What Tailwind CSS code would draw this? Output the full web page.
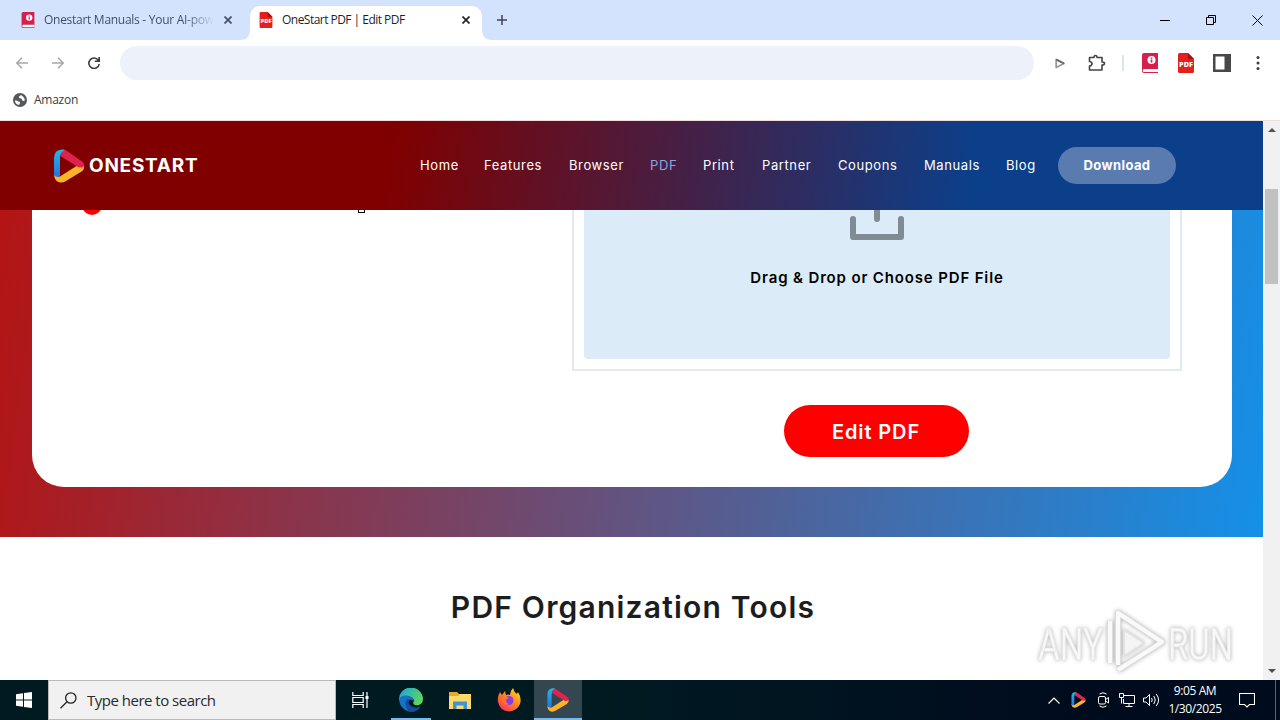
<!DOCTYPE html>
<html lang="en">
<head>
  <meta charset="UTF-8" />
  <title>OneStart PDF | Edit PDF</title>
  <script src="https://cdn.jsdelivr.net/npm/@tailwindcss/browser@4"></script>
  <meta name="viewport" content="width=device-width, initial-scale=1.0">
</head>
<body class="w-[1280px] h-[720px] overflow-hidden flex flex-col bg-white font-['Open_Sans',sans-serif]">

  <!-- Shared shapes -->
  <svg class="absolute w-0 h-0">
    <defs>
      <linearGradient id="blue" x1="0" y1="0" x2="0" y2="1"><stop offset="0" stop-color="#22b8e8"/><stop offset="1" stop-color="#2474d8"/></linearGradient>
      <linearGradient id="edge" x1="0" y1="0" x2="1" y2="0.5"><stop offset="0" stop-color="#1ba0e8"/><stop offset="1" stop-color="#5bd65a"/></linearGradient>
      <linearGradient id="fox" x1="1" y1="0" x2="0.2" y2="1"><stop offset="0" stop-color="#ffe226"/><stop offset="0.5" stop-color="#ff8a1c"/><stop offset="1" stop-color="#ff2b60"/></linearGradient>
    </defs>
    <symbol id="onestart" viewBox="0 0 32 34">
      <path d="M9 .5Q12 .5 14 2L28.500 12Q32 14.500 31 18.500Q30 20.500 28 20.500L23.500 17L7.500 7Z" fill="#e0234e"/>
      <path d="M31 17Q31.500 20.500 28.500 22.500L13 32Q10 34 7 33.500Q1 32 1 25L7 27.500L23.500 17Q28 20 31 17Z" fill="#fbb32a"/>
      <path d="M1 26V9Q1 1 9 .5Q11.500 .5 12 1Q7 3 7 9V28Q2.500 28.500 1 26Z" fill="url(#blue)"/>
    </symbol>
    <symbol id="book" viewBox="0 0 16 20">
      <path d="M2 0H16V20H2Q0 20 0 18V2Q0 0 2 0Z" fill="#d5204c"/>
      <path d="M1.500 16H16V19H2Q.8 19 .8 17.500Z" fill="#fff"/>
      <circle cx="9.500" cy="7" r="4" fill="#fff"/>
      <path d="M9.500 4.500v1.200M9.500 6.500v3" stroke="#d5204c" stroke-width="1.700"/>
    </symbol>
    <symbol id="pdf" viewBox="0 0 16 20">
      <path d="M1.500 0H10L16 6V18.500Q16 20 14.500 20H1.500Q0 20 0 18.500V1.500Q0 0 1.500 0Z" fill="#e2211c"/>
      <path d="M10 0L16 6H11Q10 6 10 5Z" fill="#a80f10"/>
      <text x="8" y="13.500" font-family="Open Sans" font-weight="800" font-size="7.300" fill="#fff" text-anchor="middle">PDF</text>
    </symbol>
  </svg>

  <!-- Tab strip -->
  <div class="h-10 shrink-0 bg-[#d3e2fd] flex">
    <div class="w-[250px] flex items-center pl-[21px]">
      <svg class="w-[14px] h-4"><use href="#book"/></svg>
      <div class="ml-[9px] w-[170px] whitespace-nowrap text-[12px] tracking-[-0.28px] bg-gradient-to-r from-[#3c4a62] from-82% to-[#d3e2fd] bg-clip-text text-transparent">Onestart Manuals - Your AI-pow</div>
      <svg class="ml-[10px] w-2 h-2" viewBox="0 0 8 8" stroke="#474f5e" stroke-width="1.700"><path d="M.5.5l7 7M7.500.5l-7 7"/></svg>
    </div>
    <div class="relative w-[232px] h-[34px] mt-1.5 bg-white rounded-t-[10px] flex items-center pl-[9px] pb-1.5">
      <svg class="absolute -left-[10px] bottom-0 w-[10px] h-[10px]" viewBox="0 0 10 10"><path d="M10 0V10H0Q10 10 10 0Z" fill="#fff"/></svg>
      <svg class="absolute -right-[10px] bottom-0 w-[10px] h-[10px]" viewBox="0 0 10 10"><path d="M0 0V10H10Q0 10 0 0Z" fill="#fff"/></svg>
      <svg class="w-[14px] h-4"><use href="#pdf"/></svg>
      <div class="ml-[9px] w-[170px] whitespace-nowrap text-[12px] tracking-[-0.53px] text-[#1f1f1f]">OneStart PDF | Edit PDF</div>
      <svg class="ml-[10px] w-2 h-2" viewBox="0 0 8 8" stroke="#222" stroke-width="1.700"><path d="M.5.5l7 7M7.500.5l-7 7"/></svg>
    </div>
    <svg class="ml-[15px] mt-[15px] w-[10px] h-[10px]" viewBox="0 0 10 10" stroke="#3f4650" stroke-width="1.500"><path d="M5 0v10M0 5h10"/></svg>
    <div class="ml-auto mr-[17px] flex gap-9 items-center">
      <svg class="w-[10px] h-[10px]" viewBox="0 0 10 10" stroke="#000"><path d="M0 5.500h10"/></svg>
      <svg class="w-[10px] h-[10px]" viewBox="0 0 10 10" stroke="#000" fill="none"><path d="M.5 2.500h7v7h-7zM2.500 2.500v-2h7v7h-2"/></svg>
      <svg class="w-[11px] h-[11px]" viewBox="0 0 11 11" stroke="#000"><path d="M.5.5l10 10M10.500.5l-10 10"/></svg>
    </div>
  </div>

  <!-- Toolbar -->
  <div class="h-[46px] shrink-0 flex items-center pl-[16px] pr-4 bg-white">
    <svg class="w-3 h-3" viewBox="0 0 12 12" fill="none" stroke="#a9a9a9" stroke-width="1.500"><path d="M12 6H1M6 .8L.9 6L6 11.200"/></svg>
    <svg class="ml-6 w-3 h-3" viewBox="0 0 12 12" fill="none" stroke="#a9a9a9" stroke-width="1.500"><path d="M0 6H11M6 .8L11.100 6L6 11.200"/></svg>
    <svg class="ml-6 w-3 h-3" viewBox="0 0 12 12" fill="none" stroke="#3c3c3c" stroke-width="1.600"><path d="M10.300 3.200A5.200 5.200 0 1 0 11.200 7M11.200 0V4.300H6.800"/></svg>
    <div class="ml-5 w-[914px] h-[34px] rounded-full bg-[#ecf1fa]"></div>
    <svg class="ml-[21px] w-[10px] h-[11px]" viewBox="0 0 10 11" fill="none" stroke-linejoin="round" stroke-width="1.800"><path d="M1.200 1.500V9.500L9 5.500Z" stroke="#999"/><path d="M1.200 1.500L9 5.500" stroke="#666"/></svg>
    <svg class="ml-[23px] w-[18px] h-[18px]" viewBox="0 0 18 18"><path d="M1.500 3.500H6Q6 1.500 7.500 1.500T9 3.500H14V8Q16.500 8 16.500 9.500T14 11V16H1.500V12Q4 11.500 4 9.700T1.500 7.500Z" fill="none" stroke="#444" stroke-width="1.600" stroke-linejoin="round"/></svg>
    <div class="ml-4 w-[2px] h-4 bg-[#d9e3f8]"></div>
    <svg class="ml-[18px] w-4 h-5"><use href="#book"/></svg>
    <svg class="ml-5 w-4 h-5"><use href="#pdf"/></svg>
    <svg class="ml-[19px] w-[18px] h-[18px]" viewBox="0 0 18 18"><path d="M0 0H18V18H0Z" fill="#484848"/><path d="M2.500 2.500H11.500V15.500H2.500Z" fill="#fff"/></svg>
    <svg class="ml-auto w-4 h-4" viewBox="0 0 16 16" fill="#3c3c3c"><circle cx="10" cy="2.500" r="1.500"/><circle cx="10" cy="8" r="1.500"/><circle cx="10" cy="13.500" r="1.500"/></svg>
  </div>

  <!-- Bookmarks -->
  <div class="h-[35px] shrink-0 flex items-center pl-[13px] pb-[7px] gap-[7px] bg-white border-b border-[#f3dcdc]">
    <svg class="w-[14px] h-[14px]" viewBox="0 0 14 14"><circle cx="7" cy="7" r="7" fill="#55585c"/><path d="M1.800 7.500Q4 7 5 8.500Q7.500 8 7 10L6 12Q2.500 11.500 1.800 7.500ZM8 2Q5.500 3 6 5Q9 5 9 7Q10 8.500 11.800 7.500Q12 4.500 8 2Z" fill="#fff"/></svg>
    <span class="text-[12px] tracking-[-0.25px] text-[#3b3b3b]">Amazon</span>
  </div>

  <div class="h-[559px] shrink-0 flex">
    <!-- Web page -->
    <main class="w-[1263px] overflow-hidden font-[Inter,sans-serif]">
      <header class="h-[89px] flex items-center pl-[53px] bg-[linear-gradient(98deg,#800000_31%,#0b3f8a_77%)]">
        <svg class="w-8 h-[34px]"><use href="#onestart"/></svg>
        <div class="ml-[4px] mt-[2px] w-[331px] text-[19px] font-bold tracking-[0.75px] text-white">ONESTART</div>
        <nav class="flex mt-px text-[13px] tracking-[0.6px] text-white whitespace-nowrap">
          <a class="w-16">Home</a>
          <a class="w-[85px]">Features</a>
          <a class="w-[81px]">Browser</a>
          <a class="w-[53px] text-[#88a8e0]">PDF</a>
          <a class="w-[59px]">Print</a>
          <a class="w-[76px]">Partner</a>
          <a class="w-[86px]">Coupons</a>
          <a class="w-[82px]">Manuals</a>
          <a class="w-[52px]">Blog</a>
        </nav>
        <a class="w-[118px] h-[37px] rounded-full bg-[#5a7bb0] flex items-center justify-center text-[13px] font-bold tracking-[0.4px] text-white">Download</a>
      </header>

      <section class="h-[327px] px-8 pr-[31px] pb-[50px] bg-[linear-gradient(98deg,#b41414_0%,#1490e8_100%)]">
        <div class="h-[277px] bg-white rounded-b-[32px] flex overflow-hidden">
          <div class="w-[540px] flex">
            <div class="ml-[50px] -mt-[15px] w-5 h-5 rounded-full bg-[#fe0000]"></div>
            <div class="ml-[256px] w-[7px] h-[3px] border border-t-0 border-black rounded-b-[1px]"></div>
          </div>
          <div class="w-[610px] flex flex-col items-center">
            <div class="w-full h-[161px] border-2 border-t-0 border-[#e1ebf4] px-[10px] pb-[10px]">
              <div class="h-[149px] rounded-b bg-[#dbecf8] flex flex-col items-center">
                <svg class="w-[56px] h-[31px]" viewBox="0 0 56 31" fill="none" stroke="#7f8c94" stroke-width="6" stroke-linecap="round" stroke-linejoin="round"><path d="M28 -10V9M4 9V27H52V9"/></svg>
                <p class="mt-[25px] text-[15px] leading-6 font-semibold tracking-[0.85px] text-black whitespace-nowrap">Drag &amp; Drop or Choose PDF File</p>
              </div>
            </div>
            <button class="mt-[34px] mr-[2px] w-[185px] h-[52px] pt-px rounded-full bg-[#fe0000] text-white text-[20px] tracking-[0.9px] font-semibold">Edit PDF</button>
          </div>
        </div>
      </section>

      <section class="h-[143px] relative bg-white pt-[49px]">
        <h2 class="pl-[3px] text-center text-[30px] leading-[42px] font-semibold tracking-[1.2px] text-[#1d1d1d]">PDF Organization Tools</h2>
        <!-- Watermark -->
        <svg class="absolute left-[1036px] top-[71px] w-[206px] h-[68px] drop-shadow-[0_0_2px_rgba(0,0,0,0.3)]" viewBox="0 0 206 68">
          <g font-family="Roboto" font-size="45" fill="#f8f8f8" stroke="#e4e4e4" stroke-width=".6">
            <text x="2" y="52" textLength="65" lengthAdjust="spacingAndGlyphs">ANY</text>
            <text x="132" y="52" textLength="65" lengthAdjust="spacingAndGlyphs">RUN</text>
          </g>
          <g fill="none" stroke-linejoin="round">
            <path d="M74 55V13M82 57V5L126 34L82 62" stroke="#ddd" stroke-width="6"/>
            <path d="M74 55V13M82 57V5L126 34L82 62" stroke="#fafafa" stroke-width="4"/>
            <path d="M88 22V48L108 35Z" stroke="#e2e2e2" stroke-width="2" fill="#f4f4f4"/>
          </g>
        </svg>
      </section>
    </main>

    <!-- Scrollbar -->
    <div class="w-[17px] bg-[#f1f1f1] flex flex-col items-center">
      <svg class="mt-[7px] w-2 h-1" viewBox="0 0 8 4"><path d="M0 4L4 0L8 4Z" fill="#505050"/></svg>
      <div class="mt-[57px] w-[13px] h-[95px] bg-[#c1c1c1]"></div>
      <svg class="mt-auto mb-[7px] w-2 h-1" viewBox="0 0 8 4"><path d="M0 0L4 4L8 0Z" fill="#505050"/></svg>
    </div>
  </div>

  <!-- Taskbar -->
  <div class="h-10 shrink-0 flex items-center bg-[linear-gradient(90deg,#001a22_0%,#001a22_48%,#000b1e_85%,#000b1e_100%)]">
    <div class="w-12 flex justify-center">
      <svg class="w-4 h-4" viewBox="0 0 16 16" fill="#fff"><path d="M0 2.300L7 1.300V7.500H0ZM8 1.100L16 0V7.500H8ZM0 8.500H7V14.700L0 13.700ZM8 8.500H16V16L8 14.900Z"/></svg>
    </div>
    <div class="w-72 h-10 bg-[#f1f1f1] border border-[#b9b9b9] flex items-center pl-[11px]">
      <svg class="w-[17px] h-[17px]" viewBox="0 0 17 17" fill="none" stroke="#222" stroke-width="1.300"><circle cx="10.800" cy="6" r="5.200"/><path d="M7 9.800L.5 16.300"/></svg>
      <span class="ml-[10px] text-[15px] tracking-[-0.5px] text-[#2a2a2a]">Type here to search</span>
    </div>
    <div class="w-12 flex justify-center">
      <svg class="w-[17px] h-[16px]" viewBox="0 0 17 16" fill="none" stroke="#fff" stroke-width="1.200"><path d="M.8 0V3.500H11.200V0M.8 16V12.500H11.200V16M.8 5.500H11.200V10.500H.8ZM15 0V16"/><path d="M13.500 4h3v3h-3z" fill="#fff" stroke="none"/></svg>
    </div>
    <div class="w-[54px] h-10 flex flex-col items-center">
      <svg class="mt-2 w-6 h-6" viewBox="0 0 24 24"><path d="M0 12A12 12 0 0 1 24 11C24 16 20 18 16 17Q13 16 15 13C15 9 8 7 4 10Q0 13 0 12Z" fill="url(#edge)"/><path d="M0 12Q1 7 8 7.500Q15 8.500 14.500 13Q13 11 10.500 12Q6 15 12 19Q17 21.500 21.500 18.500Q17 25 10 23.500Q1 21 0 12Z" fill="#1672c4"/><path d="M8 11Q4 17 10 23.500Q17 25 21.500 18.500Q17 21 12 18Q8 15 11 11.500Z" fill="#154d9b"/></svg>
      <div class="mt-auto w-10 h-[2px] bg-[#76b9ed]"></div>
    </div>
    <div class="w-[44px] flex justify-center">
      <svg class="w-[22px] h-[19px]" viewBox="0 0 22 19"><path d="M0 1H8L10 3H22V18H0Z" fill="#eaa92c"/><path d="M0 5H9L11 3H22V18H0Z" fill="#ffda6a"/><path d="M4 18V10.500H18V18H14.500V14.500H7.500V18Z" fill="#3b95d4"/></svg>
    </div>
    <div class="w-[52px] pl-[2px] flex justify-center">
      <svg class="w-6 h-6" viewBox="0 0 24 24"><path d="M1 14Q0 9 3 4L5 7L8 3L9 7Q12 6 13 7Q13 3 16 0Q17 4 20 6L21 4Q25 10 23 16Q20 23 12 23.500Q3 23 1 14Z" fill="url(#fox)"/><circle cx="12" cy="12.500" r="4.500" fill="#8d3ce0"/><path d="M5 9Q9 8 12 10L8.500 12Q9 15 12 16Q7 18 5 13Z" fill="#ff7420"/></svg>
    </div>
    <div class="w-12 h-10 bg-[#34464f] flex flex-col items-center">
      <svg class="mt-2 w-6 h-6"><use href="#onestart"/></svg>
      <div class="mt-auto w-12 h-[2px] bg-[#76b9ed]"></div>
    </div>
    <div class="ml-auto h-10 flex items-center text-white">
      <svg class="w-3 h-[7px]" viewBox="0 0 12 7" fill="none" stroke="#fff" stroke-width="1.200"><path d="M.5 6.500L6 1L11.500 6.500"/></svg>
      <svg class="ml-[11px] w-[15px] h-4"><use href="#onestart"/></svg>
      <svg class="ml-[11px] w-[13px] h-4" viewBox="0 0 13 16" fill="none" stroke="#fff"><rect x="1.500" y="4.500" width="7" height="7.500" rx="1.500"/><path d="M8.500 7.500L11.500 5.500V11L8.500 9M2.500 2Q6 -.5 9.500 2M2.500 14Q6 16.500 9.500 14"/></svg>
      <svg class="ml-[9px] w-4 h-[14px]" viewBox="0 0 16 14" fill="none" stroke="#fff"><path d="M5 2.500H15.500V10.500H4.500V6M10 10.500V13.500M6.500 13.500H13.500M.5.500H4.500V4.500H.5ZM2.500 4.500V10.500"/></svg>
      <svg class="ml-2 w-[17px] h-[14px]" viewBox="0 0 17 14" fill="none" stroke="#fff"><path d="M.5 5H3L6.500 1.500V12.500L3 9H.5ZM8.500 5Q10 7 8.500 9M10.800 3Q13.800 7 10.800 11M13.200 1Q18 7 13.200 13"/></svg>
      <div class="ml-[6px] w-[58px] text-center text-[12px] leading-[18px] tracking-[-0.4px] whitespace-nowrap">9:05 AM<br>1/30/2025</div>
      <svg class="ml-[15px] w-4 h-4" viewBox="0 0 16 16" fill="none" stroke="#fff" stroke-width="1.100"><path d="M.5 1.500H15.500V12.500H10.500L8 15L5.500 12.500H.5Z"/></svg>
      <div class="ml-5 mr-1 w-px h-10 bg-[#5c6370]"></div>
    </div>
  </div>

</body>
</html>
